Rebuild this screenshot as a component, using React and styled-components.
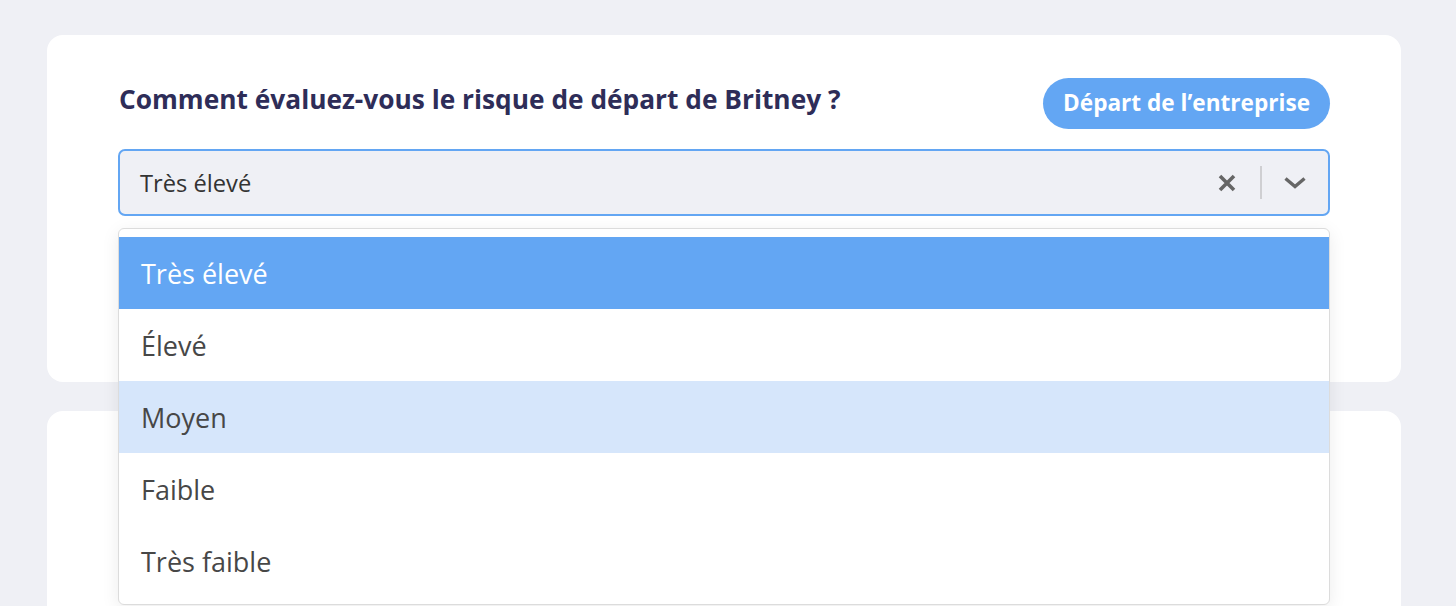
import React, { useState } from 'react';
import styled, { createGlobalStyle } from 'styled-components';

const GlobalStyle = createGlobalStyle`
    html, body {
        margin: 0;
        padding: 0;
        background: #eff0f5;
        font-family: "Open Sans", Lato, sans-serif;
        overflow: hidden;
    }
`;

const Page = styled.div`
    min-height: 606px;
    padding: 35px 55px 0 47px;
    display: flex;
    flex-direction: column;
    gap: 29px;
`;

const Card = styled.div`
    background: #fff;
    border-radius: 16px;
    padding: ${props => props.padding || '43px 71px 166px'};
    min-height: ${props => props.minHeight || 'auto'};
`;

const Header = styled.div`
    display: flex;
    justify-content: space-between;
    align-items: flex-start;
    height: 51px;
    margin-bottom: 20px;
`;

const Question = styled.h3`
    margin: 3px 0 0 1px;
    font-size: 26.3px;
    font-weight: 700;
    color: #2e2d58;
`;

const Badge = styled.span`
    height: 51px;
    box-sizing: border-box;
    padding: 0 20px 3px;
    border-radius: 26px;
    background: #63a6f3;
    color: #fff;
    font-size: 22.6px;
    font-weight: 700;
    display: flex;
    align-items: center;
`;

const SelectWrap = styled.div`
    position: relative;
`;

const Control = styled.div`
    height: 67px;
    box-sizing: border-box;
    border: 2px solid #63a6f3;
    border-radius: 7px;
    background: #eff0f5;
    display: flex;
    align-items: center;
    padding-left: 20px;
`;

const Value = styled.span`
    flex: 1;
    font-size: 23.7px;
    color: #333;
`;

const Indicators = styled.div`
    display: flex;
    align-items: center;
`;

const IconButton = styled.span`
    width: 66px;
    height: 33px;
    display: flex;
    align-items: center;
    justify-content: center;
    color: #666;
`;

const Separator = styled.span`
    width: 2px;
    height: 33px;
    background: #cfcfd2;
`;

const Menu = styled.ul`
    position: absolute;
    top: 79px;
    left: 0;
    right: 0;
    margin: 0;
    padding: 8px 0 7px;
    list-style: none;
    background: #fff;
    border: 1px solid #dcdcdc;
    border-radius: 6px;
    box-shadow: 0 4px 18px rgba(0, 0, 0, 0.08);
    z-index: 2;
`;

const Option = styled.li`
    height: 72px;
    display: flex;
    align-items: center;
    padding-left: 22px;
    font-size: 27px;
    color: ${props => (props.selected ? '#fff' : '#474747')};
    background: ${props => (props.selected ? '#63a6f3' : props.focused ? '#d6e6fb' : 'transparent')};
`;

const options = ['Très élevé', 'Élevé', 'Moyen', 'Faible', 'Très faible'];

function App() {
    const [selected] = useState('Très élevé');
    const [focused] = useState('Moyen');
    return (
        <>
            <GlobalStyle />
            <Page>
                <Card>
                    <Header>
                        <Question>Comment évaluez-vous le risque de départ de Britney ?</Question>
                        <Badge>Départ de l’entreprise</Badge>
                    </Header>
                    <SelectWrap>
                        <Control>
                            <Value>{selected}</Value>
                            <Indicators>
                                <IconButton>
                                    <svg width="18" height="18" viewBox="0 0 18 18">
                                        <path d="M2 2 L16 16 M16 2 L2 16" stroke="currentColor" strokeWidth="3.6" strokeLinecap="butt" />
                                    </svg>
                                </IconButton>
                                <Separator />
                                <IconButton>
                                    <svg width="24" height="14" viewBox="0 0 24 14">
                                        <path d="M2.5 2.5 L12 10.5 L21.5 2.5" stroke="currentColor" strokeWidth="3.4" fill="none" strokeLinejoin="miter" />
                                    </svg>
                                </IconButton>
                            </Indicators>
                        </Control>
                        <Menu>
                            {options.map(o => (
                                <Option key={o} selected={o === selected} focused={o === focused}>{o}</Option>
                            ))}
                        </Menu>
                    </SelectWrap>
                </Card>
                <Card padding="0" minHeight="400px" />
            </Page>
        </>
    );
}

export default App;
